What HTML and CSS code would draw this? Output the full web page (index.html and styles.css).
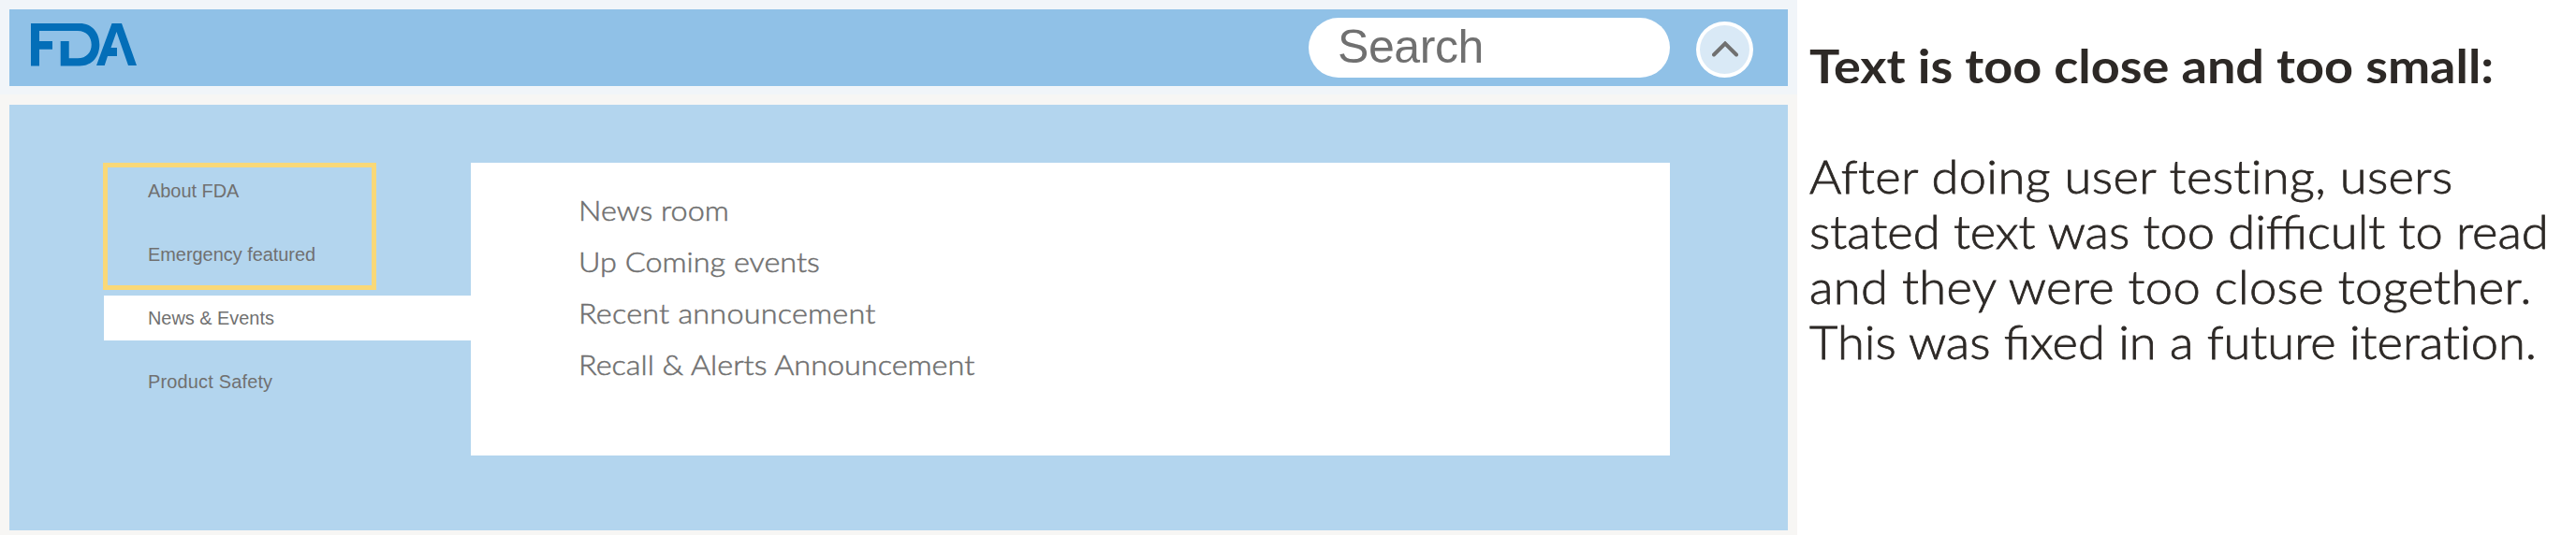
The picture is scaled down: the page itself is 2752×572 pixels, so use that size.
FILE: index.html
```html
<!DOCTYPE html>
<html lang="en">
<head>
<meta charset="utf-8">
<title>FDA navigation review</title>
<link rel="stylesheet" href="styles.css">
</head>
<body>
<main class="page">
  <section class="mockup">
    <header class="topbar">
      <svg class="logo" viewBox="0 0 114 46" role="img" aria-label="FDA">
        <path d="M0 0H52C66 0 73.3 10.5 73.3 22.7S66 45.4 52 45.4H31.7V19H40.7V37.2H50C59.5 37.2 64.7 31 64.7 22.7S59.5 8 50 8H9V19H23V27.7H9V45.4H0Z"/>
        <path d="M70 45L86.5 0H97L113 45H104L91.5 9L85.5 26H92V35H82L78.7 45Z"/>
      </svg>
      <div class="actions">
        <div class="search">Search</div>
        <button class="toggle" aria-label="Collapse menu">
          <svg class="chevron" viewBox="0 0 28 18"><path d="M2 14.5L14 2.5L26 14.5"/></svg>
        </button>
      </div>
    </header>
    <div class="menu">
      <nav class="sidebar">
        <div class="highlight">
          <a class="tab">About FDA</a>
          <a class="tab">Emergency featured</a>
        </div>
        <a class="tab active">News &amp; Events</a>
        <a class="tab safety">Product Safety</a>
      </nav>
      <ul class="links">
        <li>News room</li>
        <li>Up Coming events</li>
        <li class="loose">Recent announcement</li>
        <li>Recall &amp; Alerts Announcement</li>
      </ul>
    </div>
  </section>
  <aside class="notes">
    <h1>Text is too close and too small:</h1>
    <p><span class="loose">After doing user testing, users</span><br>stated text was too di<b class="lig">ffi</b>cult to read<br><span class="loose">and they were too close together.</span><br>This was <b class="lig">fi</b>xed in a future iteration.</p>
  </aside>
</main>
</body>
</html>
```
FILE: styles.css
```css
* { box-sizing: border-box; }
body { margin: 0; background: #fff; }
.page { display: flex; width: 2752px; height: 572px; overflow: hidden; }
.mockup {
  flex: none; width: 1920px; height: 572px; padding: 10px 10px 5px;
  display: flex; flex-direction: column; gap: 20px;
  background: linear-gradient(#f1f5f9 0 101px, #f7f6f4 101px);
}
.topbar {
  height: 82px; padding: 9px 37px 9px 23px;
  display: flex; justify-content: space-between; align-items: flex-start;
  background: #90c1e7;
}
.logo { width: 114px; height: 46px; margin-top: 6px; fill: #036eb8; }
.actions { display: flex; gap: 28px; }
.search {
  width: 386px; height: 64px; padding-left: 31px; border-radius: 32px;
  background: #fff; color: #707070;
  font: 50px/62px "Liberation Sans", Arial, sans-serif; letter-spacing: -0.4px;
}
.toggle {
  width: 61px; height: 60px; margin-top: 4px; padding: 0;
  display: flex; justify-content: center; align-items: center;
  border: 4px solid #fff; border-radius: 50%; background: #d9e9f6;
}
.chevron { width: 28px; height: 18px; fill: none; stroke: #707070; stroke-width: 4; stroke-linecap: round; }
.menu { height: 455px; padding: 62px 126px 0 100px; display: flex; background: #b3d5ee; }
.sidebar { width: 393px; }
.highlight {
  width: 292px; height: 136px; padding-top: 1px;
  border: 5px solid #f9d877;
}
.tab {
  display: block; height: 48px; padding-left: 47px; margin-left: 1px;
  color: #707070; font: 19.9px/48px "Liberation Sans", Arial, sans-serif;
}
.highlight .tab { padding-left: 42px; }
.tab + .tab { margin-top: 20px; }
.active { margin-top: 6px; background: #fff; }
.safety { letter-spacing: 0.2px; }
.links {
  flex: 1; height: 313px; margin: 0; padding: 23px 0 0 115px; list-style: none;
  background: #fff; color: #707070; font: 300 30px/55px Lato, sans-serif;
  -webkit-text-stroke: 0.5px #707070;
}
.links li { transform: scaleX(1.08); transform-origin: left; font-variant-ligatures: no-common-ligatures; }
.links .loose { letter-spacing: 0.2px; }
.notes { padding: 41px 0 0 13px; color: #2d2926; font-family: Lato, sans-serif; white-space: nowrap; font-variant-ligatures: no-common-ligatures; }
.notes h1 { margin: 0; font-size: 50px; line-height: 59px; font-weight: 700; transform: scaleX(1.08); transform-origin: left; }
.notes p { margin: 59px 0 0; font-size: 50px; line-height: 59px; font-weight: 300; -webkit-text-stroke: 0.8px #2d2926; transform: scaleX(1.05); transform-origin: left; }
.notes .loose { letter-spacing: 0.36px; }
.notes .lig { font-weight: inherit; font-variant-ligatures: common-ligatures; }
```
